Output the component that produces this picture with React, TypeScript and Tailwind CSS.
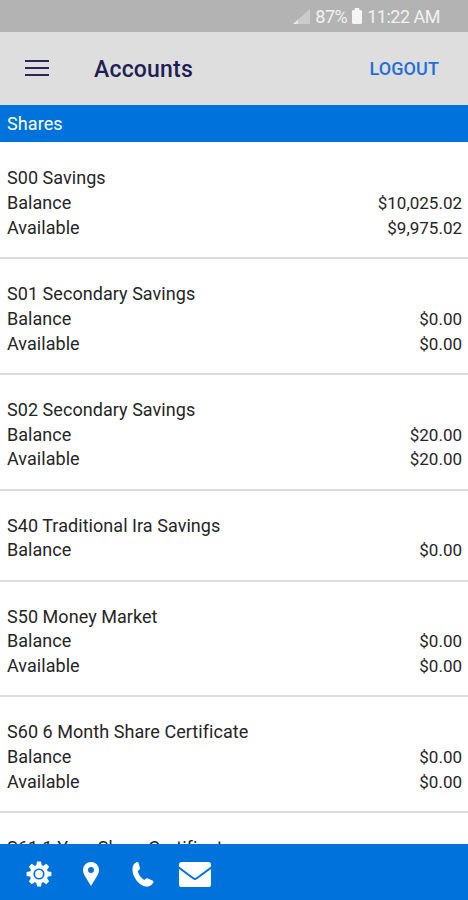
type Account = { name: string; balance: string; available?: string };

const accounts: Account[] = [
  { name: "S00 Savings", balance: "$10,025.02", available: "$9,975.02" },
  { name: "S01 Secondary Savings", balance: "$0.00", available: "$0.00" },
  { name: "S02 Secondary Savings", balance: "$20.00", available: "$20.00" },
  { name: "S40 Traditional Ira Savings", balance: "$0.00" },
  { name: "S50 Money Market", balance: "$0.00", available: "$0.00" },
  { name: "S60 6 Month Share Certificate", balance: "$0.00", available: "$0.00" },
  { name: "S61 1 Year Share Certificate", balance: "$0.00" },
];

function Row({ label, value }: { label: string; value: string }) {
  return (
    <div className="flex justify-between">
      <span>{label}</span>
      <span className="text-[17px] tracking-normal">{value}</span>
    </div>
  );
}

function StatusBar() {
  return (
    <div className="flex h-8 shrink-0 items-center justify-end bg-[#b3b3b3] pr-7 text-[18px] text-[#f1f1f1]">
      <svg className="mr-[5px] h-[15px] w-[17px]" viewBox="0 0 17 15">
        <path d="M0 15 17 0v15z" fill="#cbcbcb" />
        <path d="M0 15 5 10.6V15z" fill="#e6e6e6" />
      </svg>
      <span className="tracking-[-0.5px]">87%</span>
      <svg className="ml-[5px] mr-[5px] h-4 w-[10px]" viewBox="0 0 11 16" preserveAspectRatio="none" fill="#f5f5f5">
        <path d="M3 0h5v2h2l1 1v12l-1 1H1l-1-1V3l1-1h2z" />
      </svg>
      <span className="tracking-[-0.5px]">11:22 AM</span>
    </div>
  );
}

export default function App() {
  return (
    <div className="flex h-[900px] w-[468px] flex-col overflow-hidden bg-white font-['Roboto',sans-serif]">
      <StatusBar />
      <header className="flex h-[73px] shrink-0 items-center bg-[#dedede] pl-[25px] pr-[29px]">
        <div className="flex w-6 flex-col gap-[5px] pb-[2px]">
          <i className="h-[2px] bg-[#282858]" />
          <i className="h-[2px] bg-[#282858]" />
          <i className="h-[2px] bg-[#282858]" />
        </div>
        <h1 className="ml-[45px] grow pt-[3px] text-[23px] font-medium tracking-[0.2px] text-[#1f1f55]">Accounts</h1>
        <button className="text-[18px] font-medium tracking-[0.1px] text-[#1e6fd6]">LOGOUT</button>
      </header>
      <div className="flex h-[37px] shrink-0 items-center bg-[#0072dc] px-[7px] text-[18px] tracking-[0.1px] text-white">Shares</div>
      <main className="min-h-0 grow overflow-hidden pt-[1.25px] text-[18px] leading-[24.75px] tracking-[0.05px] text-[#252525]">
        {accounts.map((a) => (
          <section key={a.name} className="pl-[7px] pr-[6px] pt-[23px]">
            <div>{a.name}</div>
            <Row label="Balance" value={a.balance} />
            {a.available && <Row label="Available" value={a.available} />}
            <div className="-ml-[7px] -mr-[6px] mt-[16.5px] h-[2px] bg-[#dcdcdc]" />
          </section>
        ))}
      </main>
      <footer className="flex h-14 shrink-0 items-center bg-[#0072dc] pb-px pl-[26px] pt-[5px] text-white">
        <svg className="size-[26px]" viewBox="-13 -13 26 26">
          <circle r="7.4" fill="none" stroke="currentColor" strokeWidth="3.600" />
          <g fill="currentColor">
            {[0, 45, 90, 135, 180, 225, 270, 315].map((r) => (
              <path key={r} d="M-2.8-8-2-12.400h4L2.800-8z" transform={`rotate(${r})`} />
            ))}
            <circle r="3.900" />
          </g>
        </svg>
        <svg className="ml-[31px] h-6 w-4" viewBox="0 0 16 24" fill="currentColor" fillRule="evenodd">
          <path d="M8 0a8 8 0 0 1 8 8c0 4.500-4 9-8 16C4 17 0 12.500 0 8a8 8 0 0 1 8-8Zm0 5a3 3 0 1 0 0 6 3 3 0 0 0 0-6Z" />
        </svg>
        <svg className="ml-[33px] h-[25px] w-[22px]" viewBox="0 0 22 25" fill="currentColor">
          <path d="M4.500.3c1-.5 1.700-.1 2.100.8l1.300 4.700c.2 1-.2 1.600-.9 2.100L5.700 9c.8 3.500 3.400 7.200 6.500 9l1.500-1.300c.7-.6 1.400-.7 2.200-.3l4.500 2c1 .5 1.300 1.200.8 2.200-1.300 3.200-4 4.300-7.200 4C7.300 23.500 1 16 .5 8.500.3 4.500 1.200 1.700 4.500.3Z" />
        </svg>
        <svg className="ml-[25px] h-[25px] w-8" viewBox="0 0 32 25" fill="currentColor">
          <path d="M2.500 0h27Q32 0 32 2.500v2L17.200 15.500q-1.200.8-2.400 0L0 4.500v-2Q0 0 2.500 0Z" />
          <path d="m0 7 14 10.300q2 1.300 4 0L32 7v15.500q0 2.500-2.500 2.500h-27Q0 25 0 22.500Z" />
        </svg>
      </footer>
    </div>
  );
}
